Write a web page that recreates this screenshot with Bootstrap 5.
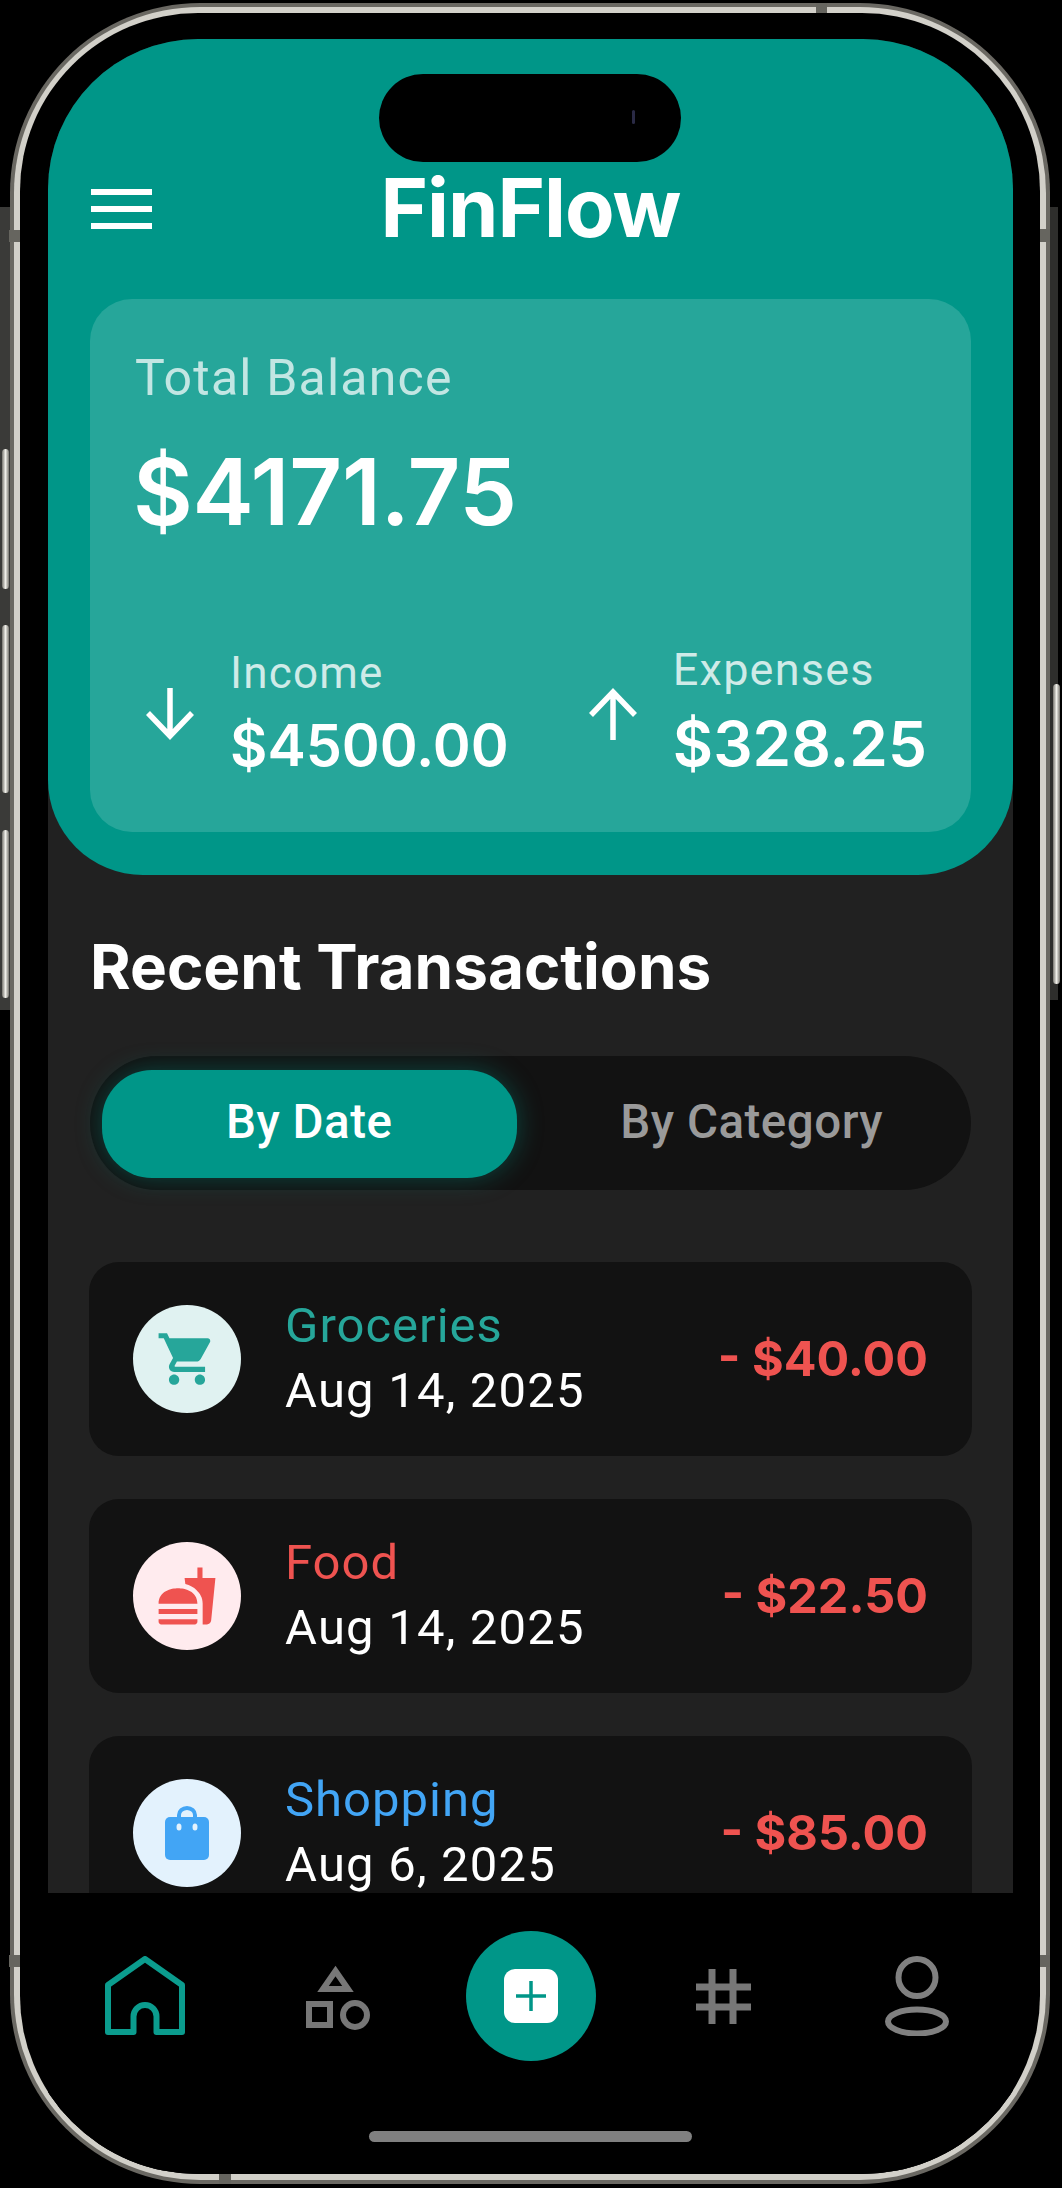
<!DOCTYPE html>
<html lang="en">
<head>
<meta charset="utf-8">
<title>FinFlow</title>
<link href="https://cdn.jsdelivr.net/npm/bootstrap@5.3.0/dist/css/bootstrap.min.css" rel="stylesheet">
<style>
html,body{background:#000;margin:0;width:1062px;height:2188px;overflow:hidden}
body{font-family:Roboto,"Liberation Sans",sans-serif;color:#fff}
.stage{position:relative;width:1062px;height:2188px;padding:3px 12px 4px 10px}
.side-band{position:absolute;top:207px;background:#3a3a38}
.band-l{left:0;width:10px;height:803px}
.band-r{left:1050px;width:8px;height:793px;background:#2e2e2c}
.side-key{position:absolute;width:7px;border-radius:4px;background:linear-gradient(90deg,#77756f,#f0efe9 50%,#77756f)}
.key-a{left:2px;top:449px;height:140px}
.key-b{left:2px;top:625px;height:168px}
.key-c{left:2px;top:830px;height:168px}
.key-d{left:1053px;top:684px;height:300px}
.tick{position:absolute;background:#66655f;z-index:3}
.tick-lt{left:9px;top:230px;width:11px;height:12px}
.tick-rt{left:1040px;top:229px;width:10px;height:13px}
.tick-lb{left:9px;top:1955px;width:11px;height:12px}
.tick-rb{left:1040px;top:1955px;width:10px;height:12px}
.tick-t{left:816px;top:3px;width:11px;height:10px}
.tick-b{left:219px;top:2174px;width:12px;height:10px}
.frame-outer{position:relative;height:2181px;padding:4px;border-radius:190px;background:#6a6862}
.frame-mid{height:100%;padding:6px;border-radius:186px;background:#d2d0c9}
.frame-inner{height:100%;border-radius:178px;background:#000;padding:26px 27px 0 28px;overflow:hidden}
.screen{position:relative;height:100%;width:965px;display:flex;flex-direction:column;background:#212121;border-radius:150px 150px 0 0;overflow:hidden}
.island{position:absolute;top:35px;left:331px;width:302px;height:88px;border-radius:44px;background:#000;z-index:2}
.island-dot{position:absolute;right:46px;top:36px;width:3px;height:14px;border-radius:2px;background:#2a2a45}
.hero{background:#009688;height:836px;border-radius:0 0 95px 95px;padding:136px 42px 43px 42px;flex:none}
.topbar{height:67px;margin-bottom:57px}
.burger{width:61px;height:40px;margin-left:1px;display:flex;flex-direction:column;justify-content:space-between}
.burger i{display:block;height:6px;background:#fff}
.brand{font-family:Inter,sans-serif;font-weight:700;font-size:81px;line-height:67px;letter-spacing:-1px}
.slot{flex:1 1 0}
.balance{height:533px;border-radius:42px;background:#26a69a;padding:52px 44px 0 45px}
.bal-label{font-size:50px;line-height:54px;letter-spacing:1.2px;color:rgba(255,255,255,.72)}
.bal-value{font-family:Inter,sans-serif;font-weight:600;font-size:92px;line-height:100px;margin:37px 0 0 -2px;letter-spacing:-.3px}
.stats{margin-top:107px;margin-left:10px}
.stat-l{font-size:44px;line-height:48px;letter-spacing:1.2px;color:rgba(255,255,255,.78)}
.stat-v{font-family:Inter,sans-serif;font-weight:600;font-size:57.500px;line-height:68px;margin-top:14px}
.stat-wide{margin-top:-4px}
.stat-wide .stat-l{font-size:45px}
.stat-wide .stat-v{font-size:62px;margin-top:16px}
.stat-gap{gap:35px}
.arrow{width:50px;height:52px;flex:none}
.feed{flex:1 1 0;min-height:0;overflow:hidden;padding:0 41px 0 41px;background:#212121}
.feed-title{font-family:Inter,sans-serif;font-weight:700;font-size:62px;line-height:68px;margin:58px 0 0 1px}
.switcher{height:134px;margin:55px 1px 0 1px;padding:14px 12px;border-radius:67px;background:#121212;gap:28px}
.pill-on,.pill-off{flex:1 1 0;height:108px;border-radius:50px;border:0;font-family:Roboto,sans-serif;font-weight:500;font-size:47.500px;letter-spacing:.5px;padding:0 0 4px;line-height:104px}
.pill-on{background:#009688;color:#fff;box-shadow:0 0 26px rgba(0,150,136,.4)}
.pill-off{background:transparent;color:#9a9a9a}
.tx{height:194px;margin-top:43px;border-radius:30px;background:#121212;padding:0 44px 0 44px}
.tx-first{margin-top:72px}
.tx-icon{width:108px;height:108px;border-radius:50%;flex:none;margin-right:44px}
.glyph{width:62px;height:62px}
.tx-cat{font-size:49px;line-height:54px;letter-spacing:1px}
.tx-date{font-size:49px;line-height:56px;letter-spacing:1.2px;margin-top:10px}
.tx-sum{font-family:Inter,sans-serif;font-weight:700;font-size:48.500px;color:#ef5350}
.c-g{color:#26a69a}.b-g{background:#e0f2f1}
.c-r{color:#ef5350}.b-r{background:#ffebee}
.c-b{color:#42a5f5}.b-b{background:#e3f2fd}
.dock{height:281px;flex:none;background:#000;padding-top:38px;position:relative;z-index:1}
.dock-row{height:130px}
.fab{width:130px;height:130px;border-radius:50%;background:#009688}
.fab-in{width:54px;height:54px;border-radius:11px;background:#fff}
.grab{width:323px;height:11px;border-radius:6px;background:#808080;margin:70px auto 0}
</style>
</head>
<body>
<div class="stage">
  <div class="side-band band-l"></div>
  <div class="side-band band-r"></div>
  <div class="side-key key-a"></div>
  <div class="side-key key-b"></div>
  <div class="side-key key-c"></div>
  <div class="side-key key-d"></div>
  <div class="frame-outer">
    <div class="frame-mid">
      <div class="frame-inner">
        <div class="screen">
          <div class="island"><span class="island-dot"></span></div>
          <header class="hero">
            <div class="topbar d-flex align-items-center">
              <div class="slot"><div class="burger"><i></i><i></i><i></i></div></div>
              <div class="brand">FinFlow</div>
              <div class="slot"></div>
            </div>
            <section class="balance">
              <div class="bal-label">Total Balance</div>
              <div class="bal-value">$4171.75</div>
              <div class="stats d-flex justify-content-between">
                <div class="d-flex align-items-center stat-gap">
                  <svg class="arrow" viewBox="0 0 50 52" fill="none" stroke="#fff" stroke-width="5.500"><path d="M25 0V47M3 25L25 48L47 25"/></svg>
                  <div><div class="stat-l">Income</div><div class="stat-v">$4500.00</div></div>
                </div>
                <div class="d-flex align-items-center stat-gap">
                  <svg class="arrow" viewBox="0 0 50 52" fill="none" stroke="#fff" stroke-width="5.500"><path d="M25 52V5M3 27L25 4L47 27"/></svg>
                  <div class="stat-wide"><div class="stat-l">Expenses</div><div class="stat-v">$328.25</div></div>
                </div>
              </div>
            </section>
          </header>
          <main class="feed">
            <h2 class="feed-title">Recent Transactions</h2>
            <div class="switcher d-flex">
              <button class="pill-on" type="button">By Date</button>
              <button class="pill-off" type="button">By Category</button>
            </div>
            <div class="tx tx-first d-flex align-items-center">
              <div class="tx-icon b-g d-flex align-items-center justify-content-center">
                <svg class="glyph" viewBox="0 0 24 24" fill="#26a69a"><path d="M7 18c-1.100 0-1.990.9-1.990 2S5.900 22 7 22s2-.9 2-2-.9-2-2-2zM1 2v2h2l3.600 7.590-1.350 2.450c-.16.28-.25.61-.25.96 0 1.100.9 2 2 2h12v-2H7.420c-.14 0-.25-.11-.25-.25l.03-.12.9-1.630h7.450c.75 0 1.410-.41 1.750-1.030l3.580-6.490c.08-.14.12-.31.12-.48 0-.55-.45-1-1-1H5.210l-.94-2H1zm16 16c-1.100 0-1.990.9-1.990 2s.89 2 1.990 2 2-.9 2-2-.9-2-2-2z"/></svg>
              </div>
              <div class="flex-grow-1"><div class="tx-cat c-g">Groceries</div><div class="tx-date">Aug 14, 2025</div></div>
              <div class="tx-sum">- $40.00</div>
            </div>
            <div class="tx d-flex align-items-center">
              <div class="tx-icon b-r d-flex align-items-center justify-content-center">
                <svg class="glyph" viewBox="0 0 24 24" fill="#ef5350"><path d="M18.060 22.990h1.660c.84 0 1.530-.64 1.630-1.460L23 5.050h-5V1h-1.970v4.050h-4.970l.3 2.340c1.710.47 3.310 1.320 4.270 2.260 1.440 1.420 2.430 2.890 2.430 5.290v8.050zM1 21.990V21h15.030v.99c0 .55-.45 1-1.010 1H2.010c-.56 0-1.010-.45-1.010-1zm15.030-7c.02-4.990-5.020-6-7.520-6-2.500 0-7.510 1.010-7.510 6h15.030zM1.020 17h15v2h-15z"/></svg>
              </div>
              <div class="flex-grow-1"><div class="tx-cat c-r">Food</div><div class="tx-date">Aug 14, 2025</div></div>
              <div class="tx-sum">- $22.50</div>
            </div>
            <div class="tx d-flex align-items-center">
              <div class="tx-icon b-b d-flex align-items-center justify-content-center">
                <svg width="44" height="54" viewBox="0 0 44 54"><path d="M14 16V9a8 7 0 0 1 16 0V16" fill="none" stroke="#42a5f5" stroke-width="4"/><rect x="0" y="11" width="44" height="43" rx="5" fill="#42a5f5"/><ellipse cx="14" cy="21" rx="2.500" ry="3.500" fill="#e3f2fd"/><ellipse cx="30" cy="21" rx="2.500" ry="3.500" fill="#e3f2fd"/></svg>
              </div>
              <div class="flex-grow-1"><div class="tx-cat c-b">Shopping</div><div class="tx-date">Aug 6, 2025</div></div>
              <div class="tx-sum">- $85.00</div>
            </div>
          </main>
          <nav class="dock">
            <div class="row row-cols-5 g-0 dock-row align-items-center">
              <div class="col d-flex justify-content-center">
                <svg width="80" height="80" viewBox="0 0 80 80" fill="none" stroke="#0b9c8e" stroke-width="6" stroke-linejoin="round"><path d="M3 29L40 3L77 29V76H51.500V60.500a11.500 11.500 0 0 0-23 0V76H3Z"/></svg>
              </div>
              <div class="col d-flex justify-content-center">
                <svg width="66" height="68" viewBox="0 0 66 68" fill="none" stroke="#777" stroke-width="6"><path d="M30.500 9L43 27H18Z"/><rect x="4" y="42" width="21" height="21"/><circle cx="50" cy="53" r="12"/></svg>
              </div>
              <div class="col d-flex justify-content-center">
                <div class="fab d-flex align-items-center justify-content-center">
                  <div class="fab-in d-flex align-items-center justify-content-center">
                    <svg width="30" height="30" viewBox="0 0 30 30" stroke="#009688" stroke-width="3.500"><path d="M15 0V30M0 15H30"/></svg>
                  </div>
                </div>
              </div>
              <div class="col d-flex justify-content-center">
                <svg width="55" height="55" viewBox="0 0 55 55" stroke="#777" stroke-width="7"><path d="M16 0V55M37 0V55M0 18H55M0 38H55"/></svg>
              </div>
              <div class="col d-flex justify-content-center">
                <svg width="64" height="80" viewBox="0 0 64 80" fill="none" stroke="#808080" stroke-width="6"><circle cx="32" cy="21.500" r="18.500"/><ellipse cx="32" cy="65.500" rx="29" ry="12"/></svg>
              </div>
            </div>
            <div class="grab"></div>
          </nav>
        </div>
      </div>
    </div>
  </div>
  <span class="tick tick-lt"></span><span class="tick tick-rt"></span>
  <span class="tick tick-lb"></span><span class="tick tick-rb"></span>
  <span class="tick tick-t"></span><span class="tick tick-b"></span>
</div>
<script src="https://cdn.jsdelivr.net/npm/bootstrap@5.3.0/dist/js/bootstrap.bundle.min.js"></script>
</body>
</html>
